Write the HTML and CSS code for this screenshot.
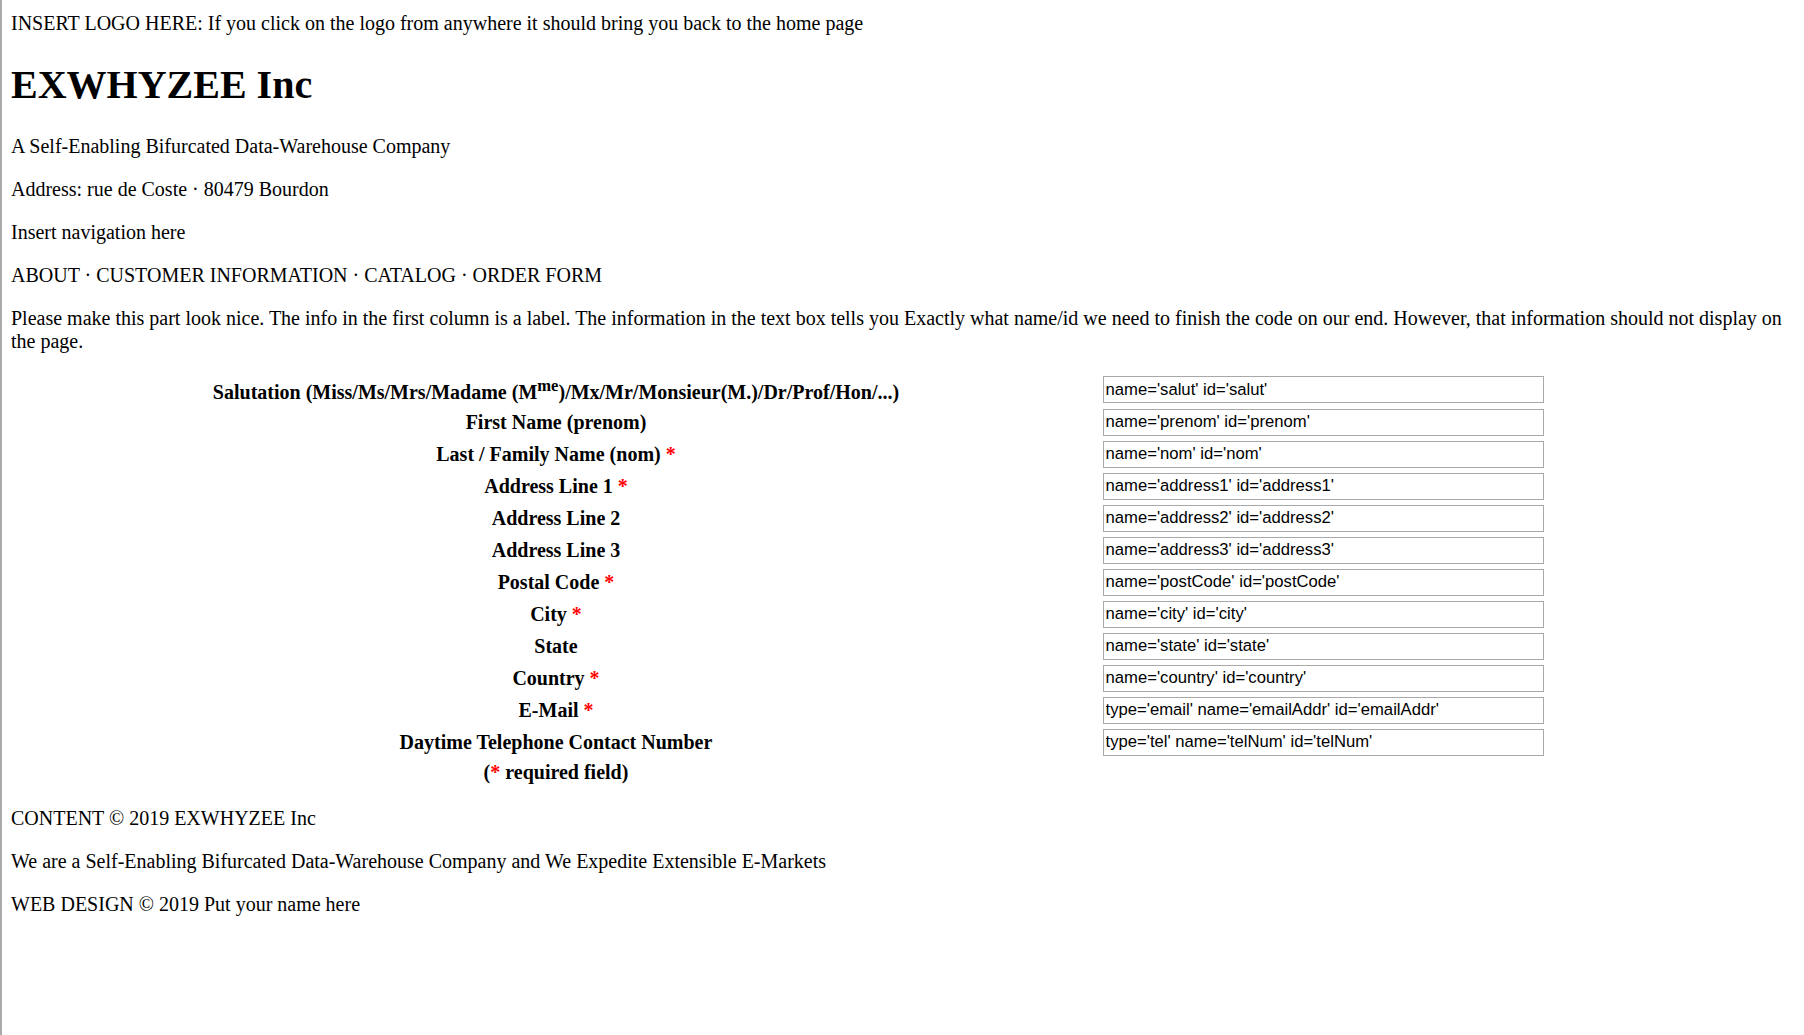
FILE: index.html
```html
<!DOCTYPE html>
<html lang="en">
<head>
<meta charset="utf-8">
<title>EXWHYZEE Inc</title>
<link rel="stylesheet" href="styles.css">
</head>
<body>
<header class="site-header">
  <div class="logo">INSERT LOGO HERE: If you click on the logo from anywhere it should bring you back to the home page</div>
  <h1 class="title">EXWHYZEE Inc</h1>
  <p class="line">A Self-Enabling Bifurcated Data-Warehouse Company</p>
  <p class="line">Address: rue de Coste · 80479 Bourdon</p>
</header>
<nav class="nav">
  <p class="line">Insert navigation here</p>
  <p class="line">ABOUT · CUSTOMER INFORMATION · CATALOG · ORDER FORM</p>
</nav>
<main>
  <p class="line">Please make this part look nice. The info in the first column is a label. The information in the text box tells you Exactly what name/id we need to finish the code on our end. However, that information should not display on the page.</p>
  <form class="form">
    <table class="form-table">
      <tr><th class="label">Salutation (Miss/Ms/Mrs/Madame (M<sup>me</sup>)/Mx/Mr/Monsieur(M.)/Dr/Prof/Hon/...)</th><td class="field"><input class="box" type="text" value="name='salut' id='salut'"></td></tr>
      <tr><th class="label">First Name (prenom)</th><td class="field"><input class="box" type="text" value="name='prenom' id='prenom'"></td></tr>
      <tr><th class="label">Last / Family Name (nom) <span class="req">*</span></th><td class="field"><input class="box" type="text" value="name='nom' id='nom'"></td></tr>
      <tr><th class="label">Address Line 1 <span class="req">*</span></th><td class="field"><input class="box" type="text" value="name='address1' id='address1'"></td></tr>
      <tr><th class="label">Address Line 2</th><td class="field"><input class="box" type="text" value="name='address2' id='address2'"></td></tr>
      <tr><th class="label">Address Line 3</th><td class="field"><input class="box" type="text" value="name='address3' id='address3'"></td></tr>
      <tr><th class="label">Postal Code <span class="req">*</span></th><td class="field"><input class="box" type="text" value="name='postCode' id='postCode'"></td></tr>
      <tr><th class="label">City <span class="req">*</span></th><td class="field"><input class="box" type="text" value="name='city' id='city'"></td></tr>
      <tr><th class="label">State</th><td class="field"><input class="box" type="text" value="name='state' id='state'"></td></tr>
      <tr><th class="label">Country <span class="req">*</span></th><td class="field"><input class="box" type="text" value="name='country' id='country'"></td></tr>
      <tr><th class="label">E-Mail <span class="req">*</span></th><td class="field"><input class="box" type="text" value="type='email' name='emailAddr' id='emailAddr'"></td></tr>
      <tr><th class="label">Daytime Telephone Contact Number</th><td class="field"><input class="box" type="text" value="type='tel' name='telNum' id='telNum'"></td></tr>
      <tr><th class="label">(<span class="req">*</span> required field)</th><td class="field"></td></tr>
    </table>
  </form>
</main>
<footer class="footer">
  <p class="line">CONTENT © 2019 EXWHYZEE Inc</p>
  <p class="line">We are a Self-Enabling Bifurcated Data-Warehouse Company and We Expedite Extensible E-Markets</p>
  <p class="line">WEB DESIGN © 2019 Put your name here</p>
</footer>
</body>
</html>
```
FILE: styles.css
```css
html {
  border-left: 2px solid #aaaaaa;
  min-height: 100%;
  box-sizing: border-box;
  background: #ffffff;
}
body {
  margin: 12px 10px 10px 9px;
  font-family: "Liberation Serif", "Times New Roman", serif;
  font-size: 20px;
  line-height: 23px;
  color: #000000;
}
.logo {
  margin: 0;
}
.title {
  font-size: 40px;
  line-height: 46px;
  font-weight: bold;
  margin: 26.8px 0;
}
.line {
  margin: 20px 0;
}
.form {
  margin: 0;
}
.form-table {
  width: 100%;
  border-spacing: 2px;
  border-collapse: separate;
}
.label {
  width: 1083px;
  padding: 1.5px;
  text-align: center;
  font-weight: bold;
  vertical-align: middle;
}
.label sup {
  font-size: 0.83em;
  line-height: 19px;
}
.field {
  padding: 1.5px;
  vertical-align: middle;
}
.req {
  color: #ff0000;
}
.box {
  display: block;
  box-sizing: border-box;
  width: 441px;
  height: 27px;
  margin: 0;
  padding: 1px 2px;
  border: 1px solid #a9a9a9;
  background: #ffffff;
  font-family: "Liberation Sans", Arial, sans-serif;
  font-size: 16.67px;
  color: #000000;
}
```
